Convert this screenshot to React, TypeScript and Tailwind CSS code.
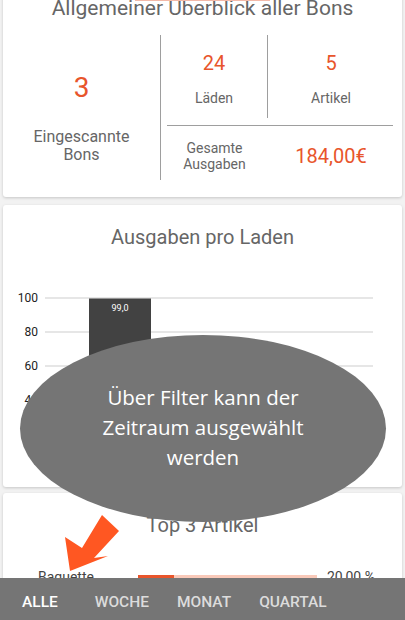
import React from 'react';

const orange = 'text-[#e8552b]';

const Card = ({ className = '', children }: { className?: string; children: React.ReactNode }) => (
  <div className={`rounded-[3px] bg-white shadow-[0_1px_3px_rgba(0,0,0,0.18)] ${className}`}>{children}</div>
);

const ticks = [100, 80, 60, 40, 20];

const App = () => {
  return (
    <div className="relative h-[620px] w-[405px] overflow-hidden bg-[#f2f2f2] font-['Roboto',sans-serif]">
      <div className="-mt-[12px] flex flex-col px-[3px]">
        {/* Überblick */}
        <Card className="pb-[17px]">
          <p className="pt-[8px] text-center text-[21px] leading-6 text-[#666]">
            Allgemeiner Überblick aller Bons
          </p>
          <div className="mt-[15px] flex h-[145px]">
            <div className="flex w-[158px] flex-col items-center border-r border-[#9e9e9e]">
              <span className={`pt-[37px] text-[28px] leading-8 ${orange}`}>3</span>
              <span className="mt-[24px] text-center text-[16px] leading-[18px] text-[#666]">
                Eingescannte
                <br />
                Bons
              </span>
            </div>
            <div className="flex flex-1 flex-col pr-[8px]">
              <div className="flex h-[83px]">
                <div className="flex w-[107px] flex-col items-center border-r border-[#9e9e9e]">
                  <span className={`pt-[16px] text-[20px] leading-6 ${orange}`}>24</span>
                  <span className="mt-[15px] text-[14px] leading-4 text-[#666]">Läden</span>
                </div>
                <div className="flex flex-1 flex-col items-center">
                  <span className={`pt-[16px] text-[20px] leading-6 ${orange}`}>5</span>
                  <span className="mt-[15px] text-[14px] leading-4 text-[#666]">Artikel</span>
                </div>
              </div>
              <div className="ml-[6px] mr-[1px] mt-[7px] h-px bg-[#9e9e9e]" />
              <div className="flex h-[54px] items-center pt-[6px]">
                <span className="w-[107px] text-center text-[14px] leading-4 text-[#666]">
                  Gesamte
                  <br />
                  Ausgaben
                </span>
                <span className={`flex-1 text-center text-[20px] leading-6 ${orange}`}>184,00€</span>
              </div>
            </div>
          </div>
        </Card>

        {/* Ausgaben pro Laden */}
        <Card className="mt-[8px] h-[282px] pt-[20px]">
          <p className="text-center text-[20px] leading-6 text-[#666]">Ausgaben pro Laden</p>
          <svg width="399" height="200" className="mt-[31px] block">
            {ticks.map((t, i) => (
              <g key={t}>
                <line x1="42" x2="370" y1={18 + i * 34} y2={18 + i * 34} stroke="#dedede" strokeWidth="1.5" />
                <text x="35" y={22 + i * 34} textAnchor="end" fontSize="12" fill="#222" fontFamily="Roboto, sans-serif">
                  {t}
                </text>
              </g>
            ))}
            <rect x="86" y="18.5" width="62" height="170" fill="#424242" />
            <text x="117" y="31" textAnchor="middle" fontSize="9" fill="#fff" fontFamily="Roboto, sans-serif">
              99,0
            </text>
          </svg>
        </Card>

        {/* Top 3 Artikel */}
        <Card className="mt-[6px] h-[200px] pt-[20px]">
          <p className="text-center text-[20px] leading-6 text-[#666]">Top 3 Artikel</p>
          <div className="mt-[30px] flex h-[20px] items-center pl-[35px]">
            <span className="w-[100px] text-[14px] text-[#444]">Baguette</span>
            <div className="flex h-[4px] w-[179px] bg-[#f9c9b9]">
              <div className="w-[36px] bg-[#e8552b]" />
            </div>
            <span className="ml-[10px] text-[14px] text-[#444]">20,00 %</span>
          </div>
        </Card>
      </div>

      <div className="absolute left-[135px] top-0 h-px w-[135px] bg-[#f3b9a8]" />

      {/* Hinweis-Overlay */}
      <div className="absolute left-[20px] top-[335px] flex h-[187px] w-[366px] items-center justify-center rounded-[50%] bg-[#757575]">
        <p className="-mt-[3px] text-center font-['Open_Sans',sans-serif] text-[20.5px] leading-[30px] text-white">
          Über Filter kann der
          <br />
          Zeitraum ausgewählt
          <br />
          werden
        </p>
      </div>

      <svg className="absolute left-0 top-0" width="405" height="620" pointerEvents="none">
        <polygon points="70,571 65,537 82,548 102,515 119,531 94,558 108,556" fill="#ff5722" />
      </svg>

      {/* Filter-Leiste */}
      <div className="absolute bottom-0 left-0 flex h-[42px] w-full items-center bg-[#757575] pt-[8px] text-[15.5px] font-medium">
        <span className="ml-[22px] text-white">ALLE</span>
        <span className="ml-[37px] text-[#dcdcdc]">WOCHE</span>
        <span className="ml-[28px] text-[#dcdcdc]">MONAT</span>
        <span className="ml-[28px] text-[#dcdcdc]">QUARTAL</span>
      </div>
    </div>
  );
};

export default App;
